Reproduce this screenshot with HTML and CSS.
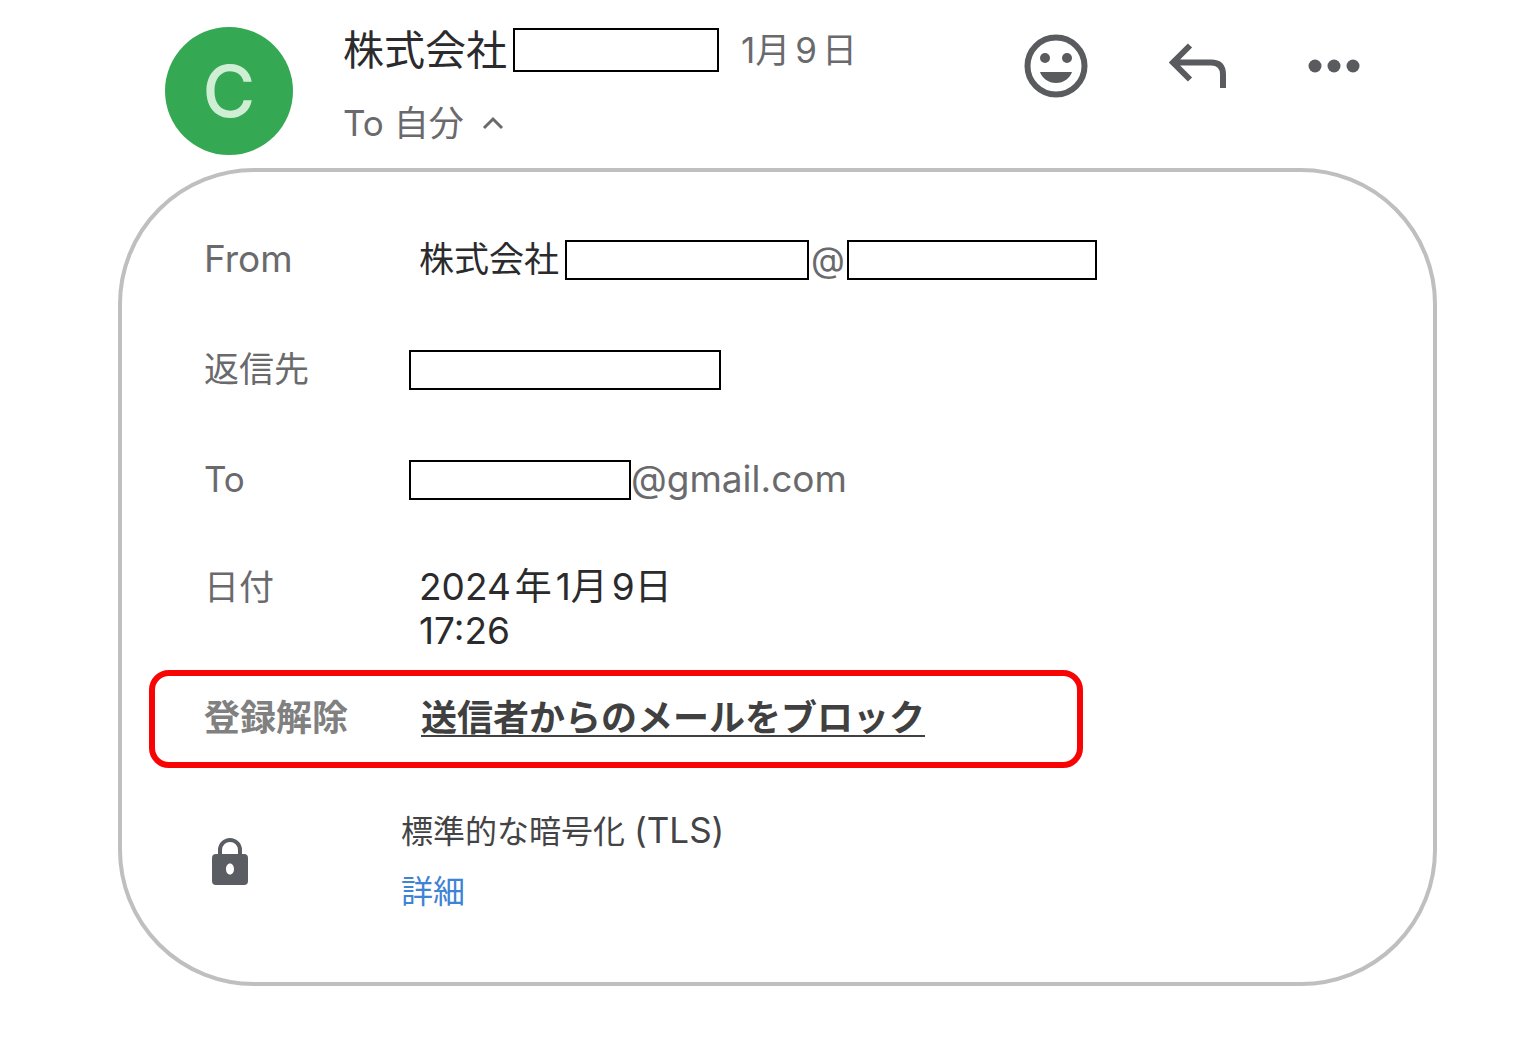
FILE: index.html
```
<!DOCTYPE html>
<html lang="ja">
<head>
<meta charset="utf-8">
<meta name="viewport" content="width=device-width, initial-scale=1">
<title>メールの詳細</title>
<link rel="stylesheet" href="styles.css">
</head>
<body>
<main class="message">
  <header class="header">
    <div class="avatar">C</div>
    <div class="summary">
      <div class="sender-line">
        <span class="sender">株式会社</span>
        <span class="mask mask-sender"></span>
        <time class="date" datetime="2024-01-09"><span>1月</span><span>9</span><span>日</span></time>
      </div>
      <button class="recipient" type="button" aria-expanded="true">
        <span>To 自分</span>
        <svg class="chevron" viewBox="0 0 22 14" aria-hidden="true"><path d="M2 12 11 3l9 9" fill="none" stroke="currentColor" stroke-width="3"/></svg>
      </button>
    </div>
    <div class="actions">
      <button class="icon-button" type="button" aria-label="リアクション">
        <svg width="64" height="64" viewBox="0 0 64 64"><circle cx="32" cy="32" r="28.500" fill="none" stroke="currentColor" stroke-width="6"/><circle cx="21" cy="24" r="5" fill="currentColor"/><circle cx="43" cy="24" r="5" fill="currentColor"/><path d="M16 38h32c-2 6-8 11-16 11s-14-5-16-11z" fill="currentColor"/></svg>
      </button>
      <button class="icon-button" type="button" aria-label="返信">
        <svg width="58" height="46" viewBox="0 0 58 46"><path d="M21 2.500 4 19.500l17 17M4 19.500h38q12 0 12 12V45" fill="none" stroke="currentColor" stroke-width="6"/></svg>
      </button>
      <button class="icon-button" type="button" aria-label="その他">
        <svg width="52" height="14" viewBox="0 0 52 14"><g fill="currentColor"><circle cx="7" cy="7" r="6.500"/><circle cx="26" cy="7" r="6.500"/><circle cx="45" cy="7" r="6.500"/></g></svg>
      </button>
    </div>
  </header>

  <section class="card">
    <dl class="details">
      <div class="row">
        <dt class="latin">From</dt>
        <dd><span class="company">株式会社</span><span class="mask mask-name"></span><span class="at">@</span><span class="mask mask-domain"></span></dd>
      </div>
      <div class="row">
        <dt>返信先</dt>
        <dd><span class="mask mask-reply"></span></dd>
      </div>
      <div class="row">
        <dt>To</dt>
        <dd><span class="mask mask-to"></span><span class="address latin">@gmail.com</span></dd>
      </div>
      <div class="row row-date">
        <dt>日付</dt>
        <dd><time class="datetime" datetime="2024-01-09T17:26"><span class="day"><span>2024</span><span>年</span><span>1月</span><span>9日</span></span><span>17:26</span></time></dd>
      </div>
      <div class="row row-highlight">
        <dt>登録解除</dt>
        <dd><a class="block-link" href="#block">送信者からのメールをブロック</a></dd>
      </div>
      <div class="row row-security">
        <dt><svg class="lock" width="36" height="48" viewBox="0 0 36 48" role="img" aria-label="暗号化"><path d="M8 18v-6a10 10 0 0 1 20 0v6" fill="none" stroke="currentColor" stroke-width="4"/><path fill-rule="evenodd" fill="currentColor" d="M4 16h28q4 0 4 4v23q0 4-4 4H4q-4 0-4-4V20q0-4 4-4zM18 25.500c-2.500 0-4 2.500-4 5.500s1.500 5.500 4 5.500 4-2.500 4-5.500-1.500-5.500-4-5.500z"/></svg></dt>
        <dd><span class="security">標準的な暗号化 <span class="protocol">(TLS)</span></span><a class="more-link" href="#details">詳細</a></dd>
      </div>
    </dl>
  </section>
</main>
</body>
</html>
```
FILE: styles.css
```
* {
  box-sizing: border-box;
}

body {
  margin: 0;
  background: #fff;
  color: #2b2b2d;
  font-family: Inter, "Noto Sans CJK JP", sans-serif;
  font-size: 35px;
  line-height: 44px;
}

button {
  padding: 0;
  border: 0;
  background: none;
  color: inherit;
  font: inherit;
  cursor: pointer;
}

.message {
  padding: 27px 83px 64px 118px;
}

.header {
  display: flex;
  align-items: flex-start;
  padding: 0 77px 0 47px;
}

.avatar {
  display: grid;
  place-items: center;
  flex: none;
  width: 128px;
  height: 128px;
  margin-right: 50px;
  border-radius: 50%;
  background: #34a853;
  color: #ceefd4;
  font-size: 72px;
  font-weight: 500;
}

.summary {
  display: flex;
  flex-direction: column;
  align-items: flex-start;
  gap: 29px;
}

.sender-line {
  display: flex;
  align-items: center;
  padding-top: 1px;
}

.sender {
  font-size: 41px;
}

.mask {
  flex: none;
  height: 40px;
  border: 2px solid #000;
  background: #fff;
}

.mask-sender {
  width: 206px;
  height: 44px;
  margin: 0 22px 0 6px;
}

.date,
.recipient,
.at,
.address,
dt {
  color: #6a6a6d;
}

.date {
  display: flex;
  gap: 5px;
}

.recipient {
  display: flex;
  align-items: center;
  gap: 18px;
}

.chevron {
  width: 22px;
  height: 14px;
}

.actions {
  display: flex;
  align-items: center;
  gap: 81px;
  height: 78px;
  margin-left: auto;
  color: #5a5b5f;
}

.icon-button {
  display: flex;
}

.card {
  margin-top: 13px;
  padding: 68px 27px 60px;
  border: 4px solid #bfbfbf;
  border-radius: 136px;
}

.details {
  display: flex;
  flex-direction: column;
  margin: 0;
}

.row {
  display: grid;
  grid-template-columns: 205px 1fr;
  align-items: start;
  min-height: 40px;
  margin-bottom: 70px;
  padding-left: 55px;
  line-height: 38px;
}

dd {
  display: flex;
  align-items: flex-start;
  margin: 0;
}

.latin {
  font-size: 37px;
}

.company {
  padding: 0 6px 0 10px;
}

.mask-name {
  width: 244px;
}

.at {
  width: 38px;
  text-align: center;
}

.mask-domain {
  width: 250px;
}

.mask-reply {
  width: 312px;
}

.mask-to {
  width: 222px;
}

.row-date {
  margin: -5px 0 17px;
  line-height: 44px;
}

.datetime {
  display: flex;
  flex-direction: column;
  padding-left: 10px;
  font-size: 37px;
}

.day {
  display: flex;
  gap: 4px;
}

.row-highlight {
  align-items: center;
  max-width: 934px;
  min-height: 98px;
  margin-bottom: 34px;
  padding: 0 0 2px 49px;
  border: 6px solid #f70505;
  border-radius: 20px;
  font-size: 36px;
  font-weight: 700;
}

.row-highlight dt {
  color: #808080;
}

.block-link {
  margin-left: 12px;
  color: #404040;
  text-decoration-thickness: 2px;
  text-underline-offset: 4px;
}

.row-security {
  grid-template-columns: 197px 1fr;
  align-items: center;
  margin-bottom: 0;
  font-size: 32px;
  line-height: 60px;
}

.row-security dd {
  flex-direction: column;
}

.security {
  color: #444446;
}

.protocol {
  font-size: 35px;
  line-height: 44px;
}

.lock {
  display: block;
  margin-left: 8px;
  color: #5a5d62;
}

.more-link {
  color: #3f83d4;
  text-decoration: none;
}
```
